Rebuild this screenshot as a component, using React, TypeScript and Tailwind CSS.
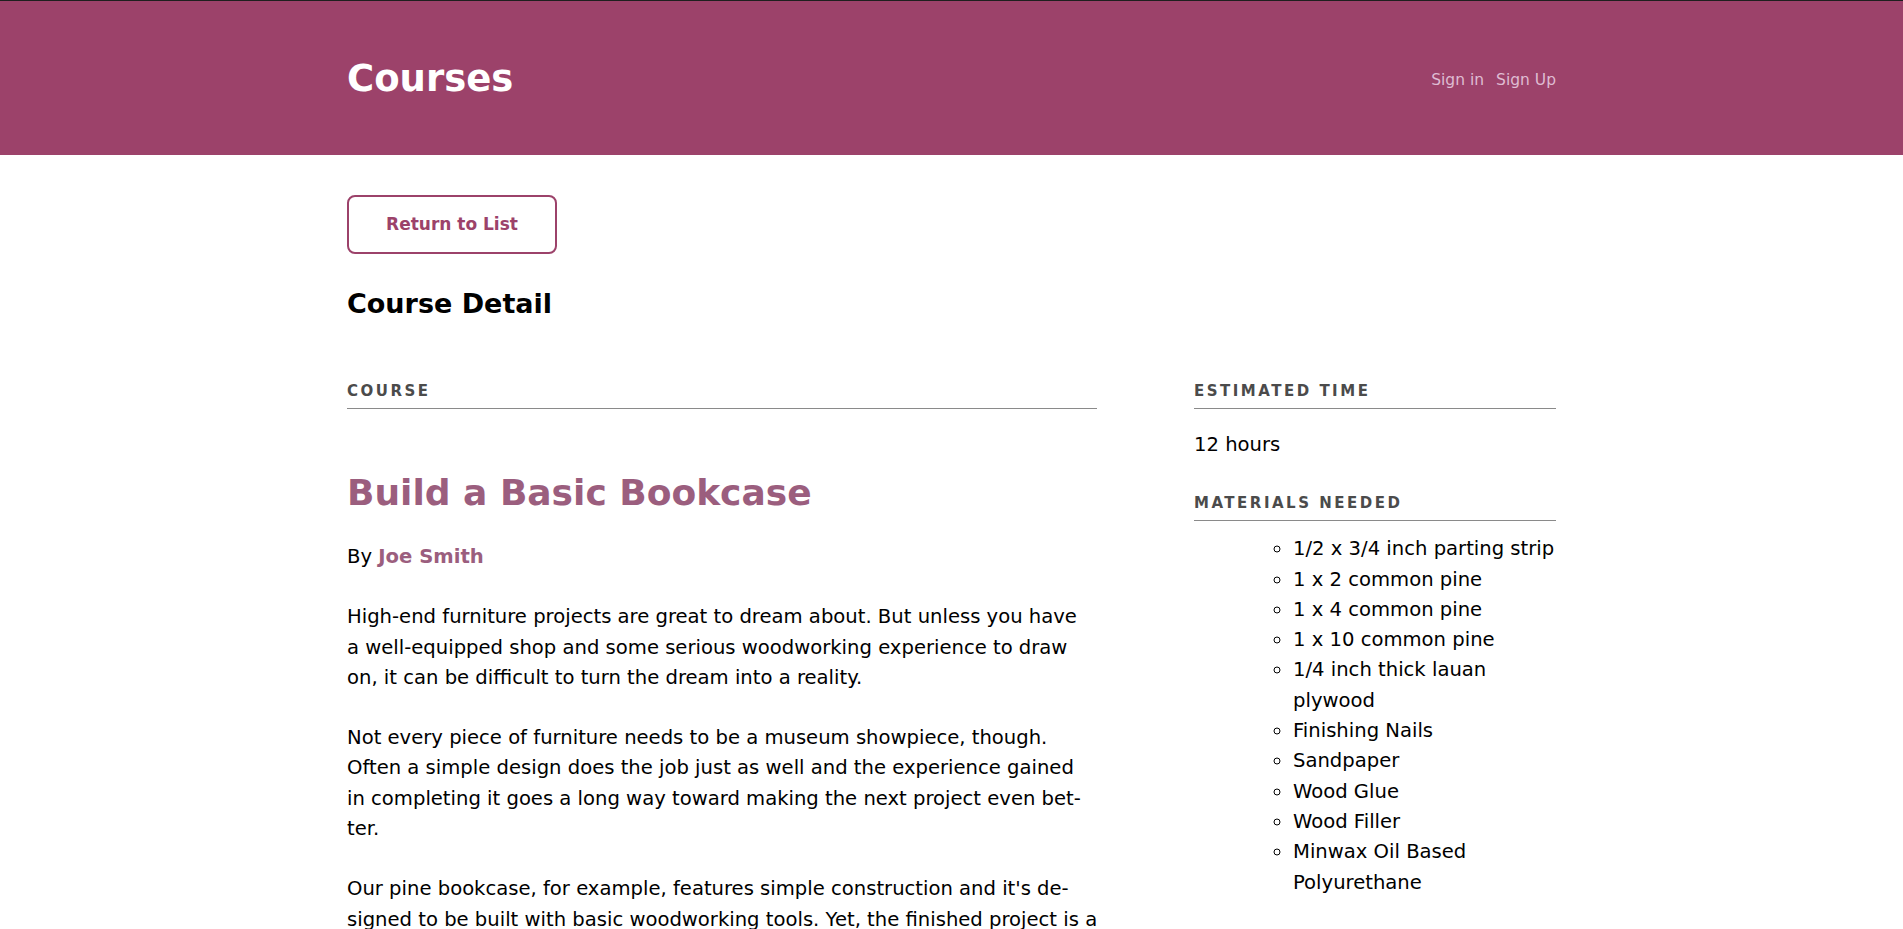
import React from "react";

const materials = [
  "1/2 x 3/4 inch parting strip",
  "1 x 2 common pine",
  "1 x 4 common pine",
  "1 x 10 common pine",
  "1/4 inch thick lauan plywood",
  "Finishing Nails",
  "Sandpaper",
  "Wood Glue",
  "Wood Filler",
  "Minwax Oil Based Polyurethane",
];

// lines kept as in the original layout (it hyphenates "bet-ter" and "de-signed")
const paragraphs = [
  [
    "High-end furniture projects are great to dream about. But unless you have",
    "a well-equipped shop and some serious woodworking experience to draw",
    "on, it can be difficult to turn the dream into a reality.",
  ],
  [
    "Not every piece of furniture needs to be a museum showpiece, though.",
    "Often a simple design does the job just as well and the experience gained",
    "in completing it goes a long way toward making the next project even bet-",
    "ter.",
  ],
  [
    "Our pine bookcase, for example, features simple construction and it's de-",
    "signed to be built with basic woodworking tools. Yet, the finished project is a",
    "reliable and handsome storage spot for books, magazines and more.",
  ],
];

function SectionLabel({ children, className = "" }: { children: React.ReactNode; className?: string }) {
  return (
    <h3
      className={`border-b border-[#8a8a8a] pb-[7px] text-[15px] leading-[20px] font-bold uppercase tracking-[2.5px] text-[#4b4b4b] ${className}`}
    >
      {children}
    </h3>
  );
}

export default function App() {
  return (
    <div className="min-h-screen bg-white font-['DejaVu_Sans',sans-serif] text-black">
      {/* Header */}
      <header className="border-t border-[#1f1f1f] bg-[#9c426a]">
        <div className="mx-auto flex h-[154px] max-w-[1209px] items-center justify-between">
          <h1 className="text-[37px] leading-none font-bold text-white">Courses</h1>
          <nav className="flex gap-[12px] pt-[6px] text-[15.5px] text-[#dfbcd2]">
            <a href="#">Sign in</a>
            <a href="#">Sign Up</a>
          </nav>
        </div>
      </header>

      <main className="mx-auto max-w-[1209px] pt-[40px]">
        <button className="flex h-[59px] w-[210px] items-center justify-center rounded-[8px] border-2 border-[#9c426a] text-[17px] font-bold text-[#9c426a]">
          Return to List
        </button>

        <h2 className="mt-[33px] text-[27px] leading-[34px] font-bold">Course Detail</h2>

        <div className="mt-[60px] flex justify-between text-[19.6px] leading-[30.3px]">
          {/* Course column */}
          <div className="w-[750px]">
            <SectionLabel>Course</SectionLabel>
            <h4 className="mt-[62px] text-[36px] leading-[44px] font-bold text-[#9b5e7e]">
              Build a Basic Bookcase
            </h4>
            <p className="mt-[27px]">
              By <span className="font-bold text-[#9b5e7e]">Joe Smith</span>
            </p>
            {paragraphs.map((lines, i) => (
              <p key={i} className="mt-[30px] whitespace-nowrap">
                {lines.map((line, j) => (
                  <React.Fragment key={j}>
                    {line}
                    {j < lines.length - 1 && <br />}
                  </React.Fragment>
                ))}
              </p>
            ))}
          </div>

          {/* Side column */}
          <div className="w-[362px]">
            <SectionLabel>Estimated Time</SectionLabel>
            <p className="mt-[21px]">12 hours</p>
            <SectionLabel className="mt-[33px]">Materials Needed</SectionLabel>
            <ul className="mt-[13px] list-[circle] pl-[99px]">
              {materials.map((m) => (
                <li key={m}>{m}</li>
              ))}
            </ul>
          </div>
        </div>
      </main>
    </div>
  );
}
